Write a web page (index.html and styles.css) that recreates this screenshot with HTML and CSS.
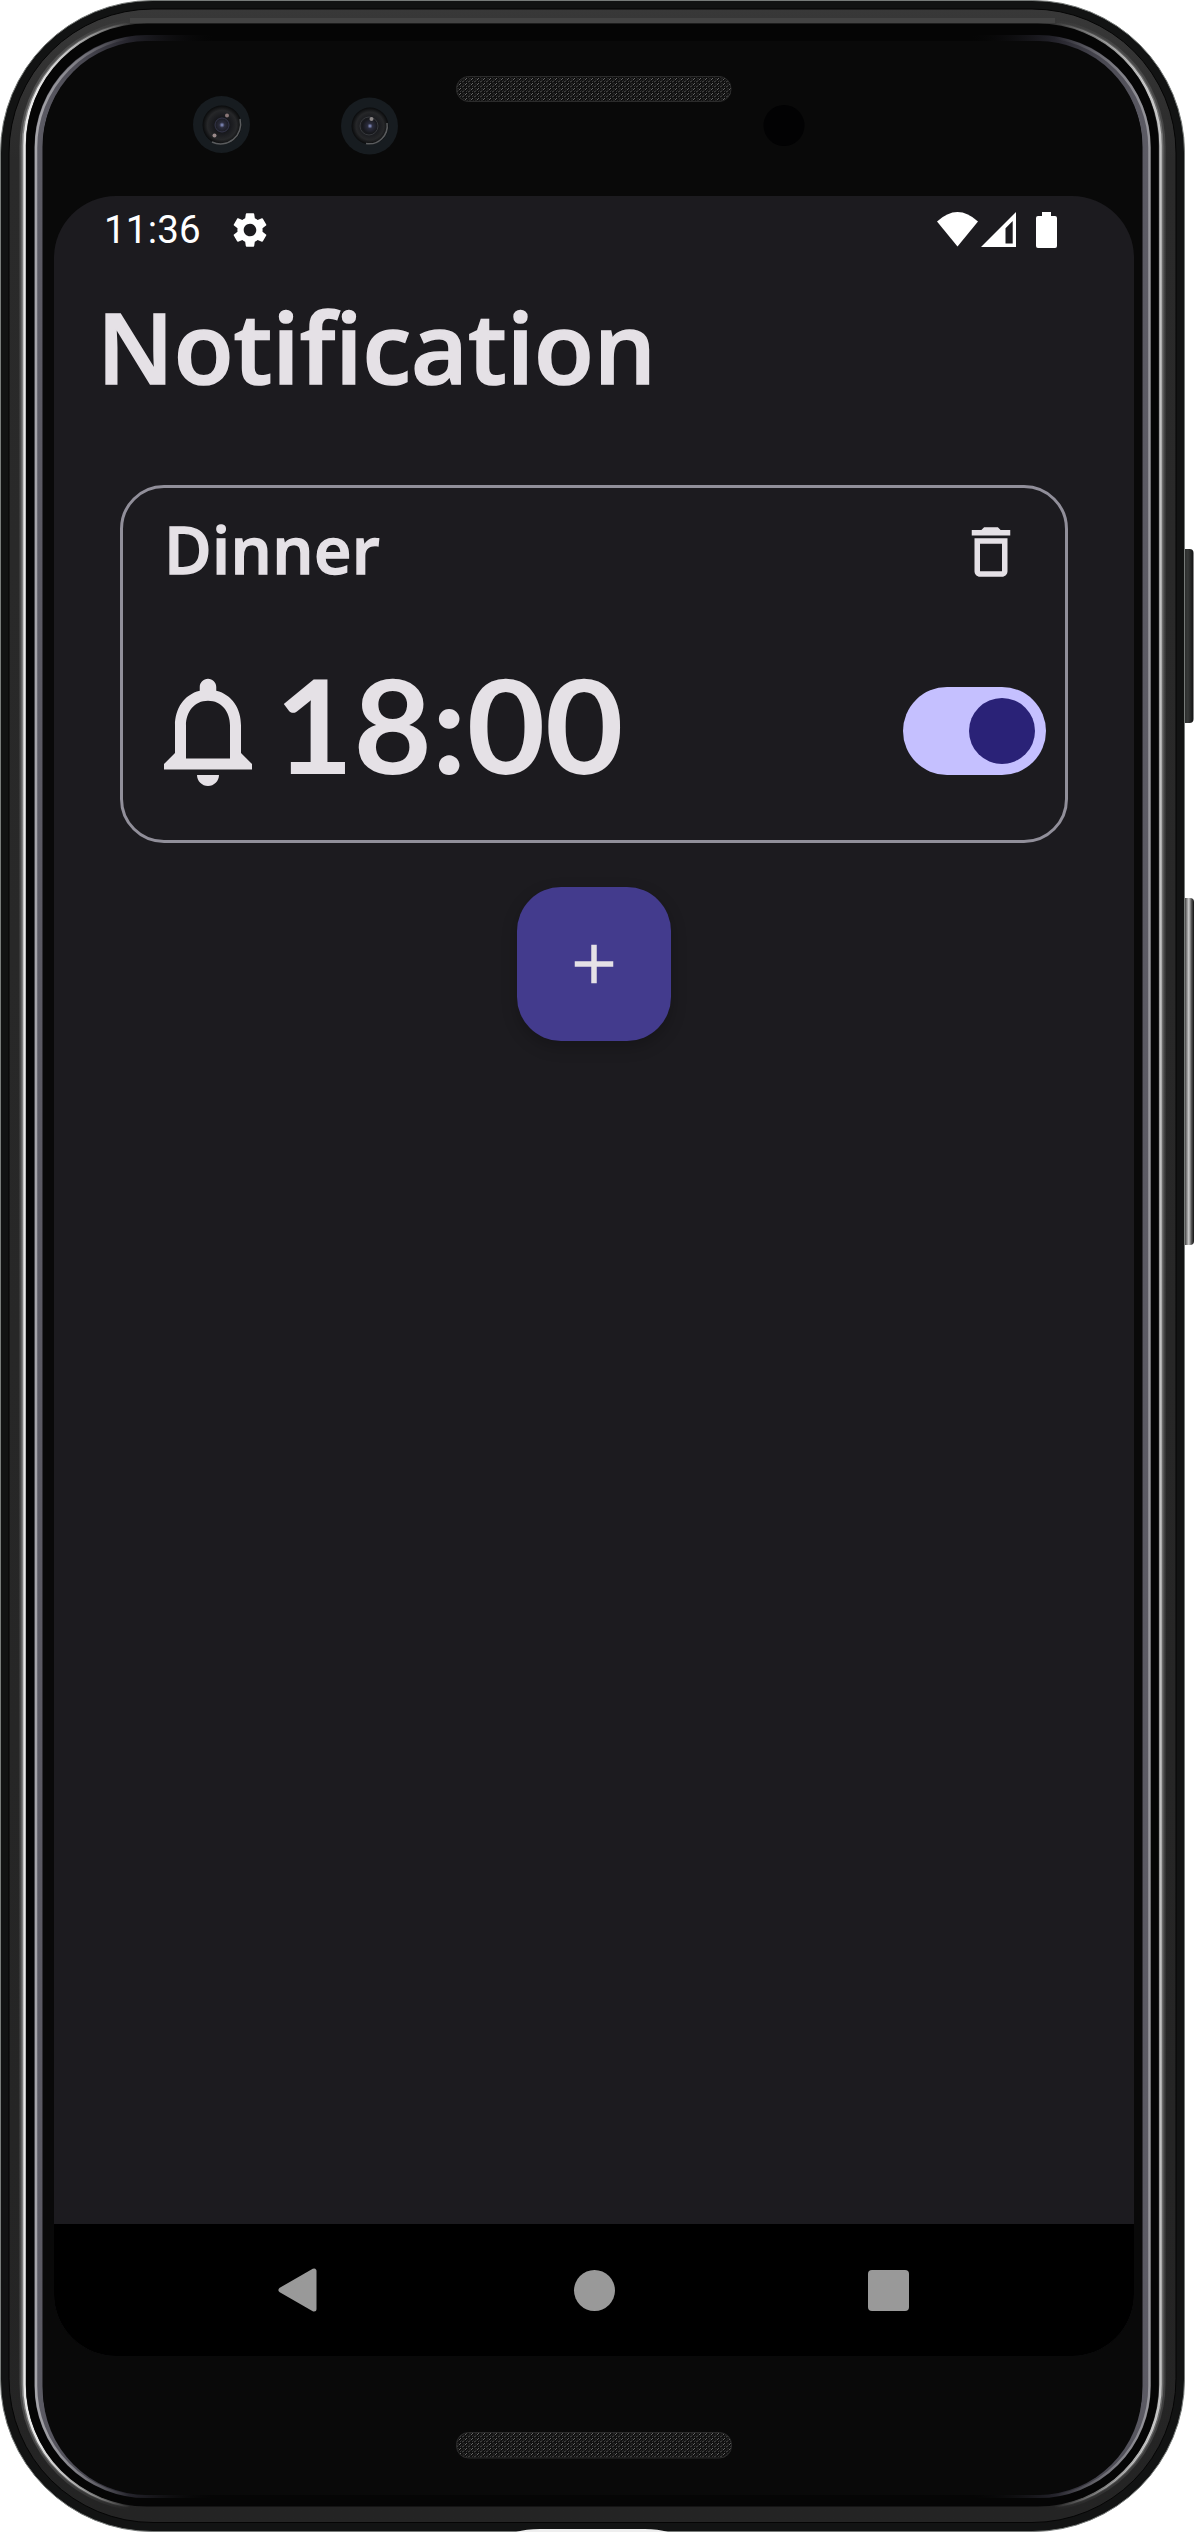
FILE: index.html
```html
<!DOCTYPE html>
<html lang="en">
<head>
<meta charset="utf-8">
<title>Notification</title>
<link rel="stylesheet" href="styles.css">
</head>
<body>
<div class="device">
  <svg class="frame" width="1194" height="2532" viewBox="0 0 1194 2532" aria-hidden="true">
    <defs>
      <linearGradient id="edge" gradientUnits="userSpaceOnUse" x1="0" x2="1185" y1="0" y2="0">
        <stop offset="0" stop-color="#fff"/>
        <stop offset=".03" stop-color="#fff"/>
        <stop offset=".055" stop-color="#fff" stop-opacity=".75"/>
        <stop offset=".11" stop-color="#fff" stop-opacity="0"/>
        <stop offset=".89" stop-color="#fff" stop-opacity="0"/>
        <stop offset=".945" stop-color="#fff" stop-opacity=".6"/>
        <stop offset=".97" stop-color="#fff" stop-opacity=".8"/>
      </linearGradient>
      <linearGradient id="rim" gradientUnits="userSpaceOnUse" x1="0" x2="1185" y1="0" y2="0">
        <stop offset=".03" stop-color="#5d5c65"/>
        <stop offset=".07" stop-color="#4a4952"/>
        <stop offset=".11" stop-color="#24232b"/>
        <stop offset=".18" stop-color="#0a0a0a" stop-opacity="0"/>
        <stop offset=".82" stop-color="#0a0a0a" stop-opacity="0"/>
        <stop offset=".89" stop-color="#24232b"/>
        <stop offset=".93" stop-color="#4a4952"/>
        <stop offset=".97" stop-color="#5d5c65"/>
      </linearGradient>
      <linearGradient id="band" x1="0" x2="0" y1="0" y2="1">
        <stop offset="0" stop-color="#383838"/>
        <stop offset=".06" stop-color="#2a2a2a"/>
        <stop offset="1" stop-color="#242424"/>
      </linearGradient>
      <linearGradient id="button" x1="0" x2="1" y1="0" y2="0">
        <stop offset="0" stop-color="#202121"/>
        <stop offset=".55" stop-color="#383a39"/>
        <stop offset="1" stop-color="#111"/>
      </linearGradient>
      <linearGradient id="volume" x1="0" x2="1" y1="0" y2="0">
        <stop offset="0" stop-color="#222"/>
        <stop offset=".3" stop-color="#444"/>
        <stop offset=".6" stop-color="#ccc"/>
        <stop offset=".8" stop-color="#555"/>
        <stop offset="1" stop-color="#111"/>
      </linearGradient>
      <pattern id="mesh" width="6" height="5" patternUnits="userSpaceOnUse">
        <rect width="6" height="5" fill="#101010"/>
        <path d="M0 2.5L2 .5M3 5L5 3" stroke="#666" stroke-width="1"/>
        <path d="M1 4.5L2.5 3M4 2L5.5 .5" stroke="#3c3c3c" stroke-width="1"/>
      </pattern>
      <radialGradient id="lens">
        <stop offset="0" stop-color="#8f9ad0"/>
        <stop offset=".14" stop-color="#2b2c3c"/>
        <stop offset=".4" stop-color="#17181c"/>
        <stop offset=".75" stop-color="#262729"/>
        <stop offset="1" stop-color="#090a0b"/>
      </radialGradient>
    </defs>
    <rect x="1181" y="549" width="12.5" height="174" rx="4" fill="url(#button)"/>
    <rect x="1181" y="898" width="13" height="347" rx="4" fill="url(#volume)"/>
    <rect x=".5" y=".5" width="1184" height="2531" rx="152" fill="#121313" stroke="#777b79"/>
    <rect x="9" y="9" width="1167" height="2513.500" rx="144" fill="url(#band)" stroke="#050505"/>
    <path d="M130 20.500H1055" stroke="#444" stroke-width="5"/>
    <g fill="none" stroke="url(#edge)">
      <rect x="20.500" y="19.500" width="1144" height="2491" rx="127" stroke-width="2" opacity=".15"/>
      <rect x="22.500" y="21.500" width="1140" height="2487" rx="125" stroke-width="2" opacity=".4"/>
      <rect x="24.500" y="22.500" width="1136" height="2485" rx="123" stroke-width="2.500" opacity=".9"/>
    </g>
    <rect x="26" y="23.500" width="1132.500" height="2483" rx="121" fill="#050505"/>
    <g fill="none">
      <rect x="38.500" y="39" width="1108" height="2455" rx="108" stroke="url(#rim)" stroke-width="8"/>
      <rect x="36" y="36.500" width="1113.500" height="2460.500" rx="111" stroke="url(#edge)" stroke-width="2.500" opacity=".45"/>
    </g>
    <rect x="43" y="41" width="1099" height="2454" rx="104" fill="#090909"/>
    <g>
      <circle cx="221.500" cy="124.500" r="28.500" fill="#171c20"/>
      <circle cx="222" cy="125" r="19.500" fill="url(#lens)"/>
      <path d="M212 142A20 20 0 0 0 240 119" fill="none" stroke="#5a5c5e" stroke-width="1.500"/>
      <circle cx="222" cy="125" r="7" fill="none" stroke="#34354a"/>
      <circle cx="227" cy="115.500" r="2" fill="#8a7777"/>
      <circle cx="214.500" cy="135.500" r="2" fill="#9a8a8a"/>
      <circle cx="369.500" cy="126" r="28.500" fill="#171c20"/>
      <circle cx="370" cy="126" r="18.500" fill="url(#lens)"/>
      <path d="M366 143.500A18 18 0 0 0 387 123" fill="none" stroke="#5a5c5e" stroke-width="1.500"/>
      <circle cx="369" cy="126" r="9" fill="none" stroke="#37393d"/>
      <circle cx="371.500" cy="119" r="2" fill="#8a8585"/>
      <circle cx="784" cy="125.500" r="20.500" fill="#020203"/>
    </g>
    <rect x="456.500" y="76.500" width="274.500" height="25" rx="12" fill="url(#mesh)" stroke="#2b2b2b"/>
    <rect x="456.500" y="2432.500" width="275" height="25.500" rx="12" fill="url(#mesh)" stroke="#2b2b2b"/>
    <path d="M516 2532Q526 2529 540 2529H645Q658 2529 668 2532Z" fill="#eee"/>
  </svg>

  <main class="screen">
    <header class="status">
      <span class="clock">11:36</span>
      <svg class="gear" width="42" height="42" viewBox="0 0 24 24"><path d="M19.140 12.940c.04-.3.06-.61.06-.94 0-.32-.02-.64-.07-.94l2.030-1.580a.49.49 0 0 0 .12-.61l-1.920-3.320a.488.488 0 0 0-.59-.22l-2.390.96c-.5-.38-1.030-.7-1.620-.94l-.36-2.540a.484.484 0 0 0-.48-.41h-3.840c-.24 0-.43.17-.47.41l-.36 2.540c-.59.24-1.130.57-1.620.94l-2.390-.96c-.22-.08-.47 0-.59.22L2.740 8.870c-.12.21-.08.47.12.61l2.030 1.580c-.05.3-.09.63-.09.94s.02.64.07.94l-2.030 1.580a.49.49 0 0 0-.12.61l1.920 3.320c.12.22.37.29.59.22l2.390-.96c.5.38 1.030.7 1.620.94l.36 2.540c.05.24.24.41.48.41h3.840c.24 0 .44-.17.47-.41l.36-2.540c.59-.24 1.130-.56 1.620-.94l2.390.96c.22.08.47 0 .59-.22l1.920-3.320c.12-.22.07-.47-.12-.61l-2.010-1.580zM12 15.600c-1.980 0-3.600-1.620-3.600-3.600s1.620-3.600 3.600-3.600 3.600 1.620 3.600 3.600-1.620 3.600-3.600 3.600z"/></svg>
      <svg class="signals" width="122" height="38" viewBox="936 210 122 38">
        <path d="M937 220.500Q957.500 201.500 978 220.500L957.500 245.500Z"/>
        <path fill-rule="evenodd" d="M1016 211V246H981ZM1012.700 220L1005.500 227.200V242.500H1012.700Z"/>
        <path d="M1042 211H1051V215H1055Q1057 215 1057 217V245Q1057 247 1055 247H1038Q1036 247 1036 245V217Q1036 215 1038 215H1042Z"/>
      </svg>
    </header>

    <h1 class="title">Notification</h1>

    <section class="card">
      <div class="card-head">
        <h2 class="name">Dinner</h2>
        <svg class="trash" width="66" height="66" viewBox="0 0 24 24"><path d="M16 9v10H8V9h8m-1.500-6h-5l-1 1H5v2h14V4h-3.500l-1-1zM18 7H6v12c0 1.100.9 2 2 2h8c1.100 0 2-.9 2-2V7z"/></svg>
      </div>
      <div class="card-body">
        <svg class="bell" width="132" height="132" viewBox="0 0 24 24"><path d="M12 22c1.100 0 2-.9 2-2h-4c0 1.100.9 2 2 2zm6-6v-5c0-3.070-1.630-5.640-4.500-6.320V4c0-.83-.67-1.500-1.500-1.500s-1.500.67-1.500 1.500v.68C7.640 5.360 6 7.920 6 11v5l-2 2v1h16v-1l-2-2zm-2 1H8v-6c0-2.480 1.510-4.500 4-4.500s4 2.020 4 4.500v6z"/></svg>
        <span class="time">18:00</span>
        <span class="switch"><span class="thumb"></span></span>
      </div>
    </section>

    <button class="fab" aria-label="Add"><svg width="66" height="66" viewBox="0 0 24 24"><path d="M19 13h-6v6h-2v-6H5v-2h6V5h2v6h6v2z"/></svg></button>

    <nav class="nav">
      <svg width="46" height="50" viewBox="0 0 46 50"><path d="M40 6V44L7 25Z" stroke-width="5" stroke-linejoin="round"/></svg>
      <span class="home"></span>
      <span class="recent"></span>
    </nav>
  </main>
</div>
</body>
</html>
```
FILE: styles.css
```css
* { box-sizing: border-box; }
body { margin: 0; background: #fff; }
svg { display: block; flex: none; }
h1, h2 { margin: 0; font-weight: 600; }

.device {
  position: relative;
  width: 1194px;
  height: 2532px;
  padding: 196px 60px 176px 54px;
  overflow: hidden;
}
.frame { position: absolute; inset: 0; }

.screen {
  position: relative;
  display: flex;
  flex-direction: column;
  height: 2160px;
  border-radius: 62px;
  overflow: hidden;
  background: #1c1b1f;
  color: #e5e1e6;
  fill: #e5e1e6;
  font-family: "Open Sans", "Noto Sans", sans-serif;
  font-weight: 600;
}

.status {
  display: flex;
  align-items: center;
  height: 66px;
  padding: 1px 76px 0 50px;
  color: #fff;
  fill: #fff;
}
.clock {
  width: 125px;
  font: 400 38.5px/66px Roboto, sans-serif;
  letter-spacing: 0.2px;
}
.signals { margin-left: auto; }

.title {
  margin: 24px 0 0 43px;
  font-size: 98px;
  line-height: 120px;
  white-space: nowrap;
  -webkit-text-stroke: 1.6px currentColor;
}

.card {
  width: 948px;
  height: 358px;
  margin: 79px 0 0 66px;
  padding: 21px 19px 0;
  border: 3px solid #918f9a;
  border-radius: 44px;
}
.card-head {
  display: flex;
  justify-content: space-between;
  align-items: center;
  height: 80px;
  padding: 0 22px 0 22px;
}
.name {
  font-size: 65px;
  line-height: 80px;
  letter-spacing: 0.4px;
  -webkit-text-stroke: 1.4px currentColor;
}
.trash { margin-top: 6px; }
.card-body {
  display: flex;
  align-items: flex-start;
  height: 132px;
  margin-top: 76px;
}
.time {
  margin-left: 1px;
  font-family: Lato, sans-serif;
  font-weight: 700;
  font-size: 130px;
  line-height: 118px;
  transform: scaleX(1.04);
  transform-origin: left;
}
.switch {
  display: flex;
  justify-content: flex-end;
  align-self: center;
  width: 143px;
  height: 88px;
  margin-left: auto;
  padding: 11px;
  border-radius: 44px;
  background: #c5c0ff;
}
.thumb {
  width: 66px;
  height: 66px;
  border-radius: 50%;
  background: #2a2277;
}

.fab {
  display: grid;
  place-items: center;
  align-self: center;
  width: 154px;
  height: 154px;
  margin-top: 44px;
  padding: 0;
  border: 0;
  border-radius: 44px;
  background: #433b8d;
  fill: inherit;
  box-shadow: 0 6px 16px rgba(0, 0, 0, 0.22);
}

.nav {
  display: flex;
  align-items: center;
  justify-content: space-between;
  height: 132px;
  margin-top: auto;
  padding: 0 225px 0 220px;
  background: #000;
  fill: #999;
  stroke: #999;
}
.home {
  width: 41px;
  height: 41px;
  border-radius: 50%;
  background: #999;
}
.recent {
  width: 41px;
  height: 41px;
  border-radius: 4px;
  background: #999;
}
```
